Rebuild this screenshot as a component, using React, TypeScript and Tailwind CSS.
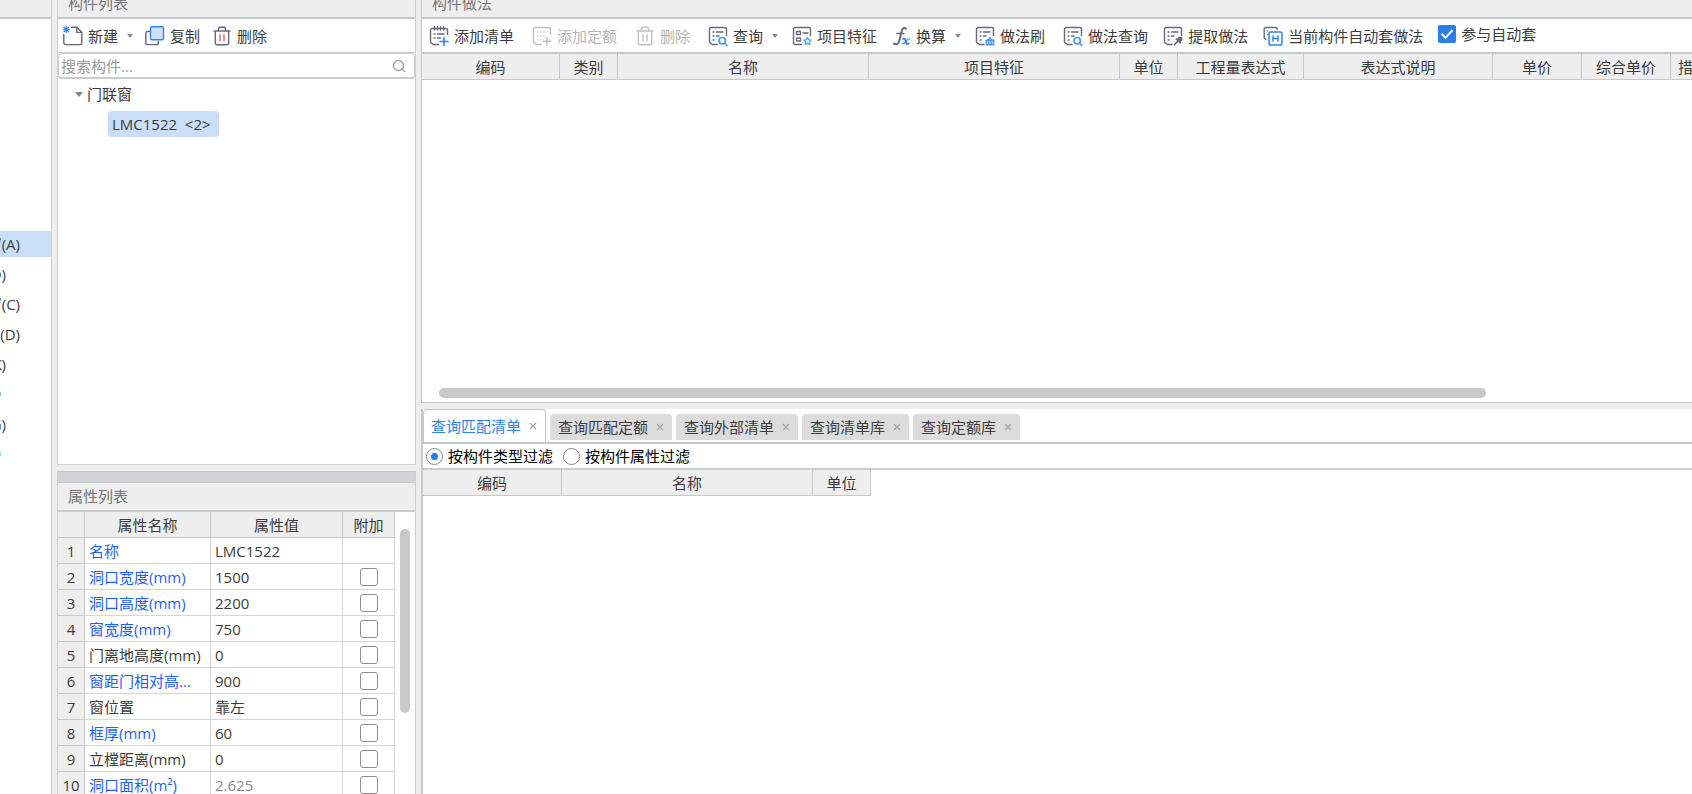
import type { ReactNode } from "react";

const INK = "#646a7c";
const BLUE = "#2f86ee";
const MUTED = "#c0c0c0";

function Svg({ children }: { children: ReactNode }) {
  return (
    <svg
      viewBox="0 0 20 20"
      className="size-5 shrink-0"
      fill="none"
      strokeWidth="1.4"
      strokeLinecap="round"
      strokeLinejoin="round"
      aria-hidden="true"
    >
      {children}
    </svg>
  );
}

function NewIcon() {
  return (
    <Svg>
      <path d="M8.500 1.200h5.500l4.800 5v10.600a1.800 1.800 0 0 1-1.800 1.800H2.600A1.800 1.800 0 0 1 .8 16.800V8.500" stroke={INK} />
      <path d="M13.800 1.400v5h4.800" stroke={INK} />
      <path d="M3.300 .6v5.800M.6 3.500h5.600M1 1.200l4.800 4.600M5.800 1.200L1 5.800" stroke={BLUE} strokeWidth="1.200" />
    </Svg>
  );
}

function CopyIcon() {
  return (
    <Svg>
      <path d="M4.500 5.500H2.400A1.600 1.600 0 0 0 .8 7.100v9.900a1.600 1.600 0 0 0 1.600 1.600h9.300a1.600 1.600 0 0 0 1.600-1.600V15.500" stroke={INK} />
      <rect x="5.500" y=".8" width="13" height="13" rx="1.6" fill="#cfe1fa" stroke={BLUE} />
    </Svg>
  );
}

function TrashIcon({ disabled }: { disabled?: boolean }) {
  const ink = disabled ? MUTED : INK;
  return (
    <Svg>
      <path d="M2 5h16M6 4.800l1.200-3.600h5.600L14 4.800M3.300 5.300v11.500a2 2 0 0 0 2 2h9.400a2 2 0 0 0 2-2V5.300" stroke={ink} />
      <path d="M8 8.800v6M12 8.800v6" stroke={disabled ? MUTED : "#ee5a5e"} />
    </Svg>
  );
}

function AddListIcon() {
  return (
    <Svg>
      <path d="M9.500 18.500H4.200l-2.700-2.300V4a1.500 1.500 0 0 1 1.500-1.500h14A1.500 1.500 0 0 1 18.500 4v4.500" stroke={INK} />
      <path d="M5.500 .8v3.200M8.500 .8v3.200M11.500 .8v3.200M14.500 .8v3.200M5 8h1M8.500 8h6.500M5 12h1M8.500 12h3" stroke={INK} />
      <path d="M15 11.500v8M11 15.500h8" stroke={BLUE} strokeWidth="1.600" />
    </Svg>
  );
}

function AddQuotaIcon() {
  return (
    <Svg>
      <path d="M9 18.500H4.200l-2.700-2.300V3A1.500 1.500 0 0 1 3 1.500h14A1.500 1.500 0 0 1 18.500 3v5.500" stroke={MUTED} />
      <path d="M5.500 6h.1M9 6h.1M12 6h.1M15 6h.1M5.500 10h.1M9 10h.1M12 10h.1M5.500 14h.1M9 14h.1" stroke={MUTED} />
      <path d="M15 11.500v7.500M11.200 15.200h7.600" stroke={MUTED} />
    </Svg>
  );
}

function SheetBase() {
  return (
    <>
      <path d="M9 18.500H4.200l-2.700-2.300V3A1.500 1.500 0 0 1 3 1.500h14A1.500 1.500 0 0 1 18.500 3v6.500" stroke={INK} />
      <path d="M5 6h1M8.500 6h6.500M5 10h1M8.500 10h2.500M5 14h1" stroke={INK} />
    </>
  );
}

function QueryIcon() {
  return (
    <Svg>
      <SheetBase />
      <circle cx="14.200" cy="14.700" r="3.200" stroke="#4a97f3" strokeWidth="1.600" />
      <path d="M16.700 17.200l2.200 2.200" stroke="#4a97f3" strokeWidth="1.600" />
    </Svg>
  );
}

function FeatureIcon() {
  return (
    <Svg>
      <path d="M9.500 18.500H3A1.500 1.500 0 0 1 1.500 17V3A1.500 1.500 0 0 1 3 1.500h14A1.500 1.500 0 0 1 18.500 3v6.500" stroke={INK} />
      <path d="M4.500 5.500h4v3h-4zM4.500 12h4v3h-4zM11 7h5" stroke={INK} strokeWidth="1.300" />
      <path d="M15.500 11.500l1.200 2.200 2.500.4-1.800 1.800.4 2.600-2.300-1.200-2.300 1.200.4-2.600-1.800-1.800 2.500-.4z" stroke="#5ba3f7" />
    </Svg>
  );
}

function FxIcon() {
  return (
    <Svg>
      <path d="M14.800 2.800c-.7-1.300-3-1.300-3.900 1.400-.6 1.800-1.800 8-2.600 10.800-.8 3-2.500 3.700-5.300 2.700" stroke={INK} strokeWidth="2" />
      <path d="M5.800 7.500h7.200" stroke={INK} strokeWidth="1.300" />
      <path d="M12.300 12.800c1.700-.6 2 .9 2.600 2.700s1.100 2.900 2.700 2.200" stroke={BLUE} strokeWidth="2" />
      <path d="M18.500 12.800c-1.500-.3-2.400 1.200-3.500 2.700s-1.800 2.500-3.300 2" stroke={BLUE} strokeWidth="1.200" />
    </Svg>
  );
}

function BrushIcon() {
  return (
    <Svg>
      <SheetBase />
      <path d="M11.300 14.500l2.400-1 1.300-1.700 1.300 1.700 2.400 1v4.300h-7.400z" stroke="#4a97f3" fill="#d3e5fc" />
      <path d="M11.300 14.800h7.400M13.800 16.500v2M16.200 16.500v2" stroke="#4a97f3" />
    </Svg>
  );
}

function ExtractIcon() {
  return (
    <Svg>
      <SheetBase />
      <path d="M11.500 18.800l3.300-3.600M13.200 13l4 3.800" stroke={INK} strokeWidth="1.600" />
      <path d="M14.800 13.200l1.200-1.700h2.500v2.700l-1.500 1.300z" stroke={INK} fill={INK} />
    </Svg>
  );
}

function AutoIcon() {
  return (
    <Svg>
      <path d="M2.800 13.500l-1.600-1.500V3A1.500 1.500 0 0 1 2.700 1.500h10A1.500 1.500 0 0 1 14.200 3v.5M4.500 5h.1M4.500 8.500h.1" stroke={INK} />
      <rect x="6" y="6" width="13" height="13" rx="1.800" stroke={BLUE} strokeWidth="1.500" />
      <path d="M10 9.800v5.400M15 9.800v5.400M10 12.500h5" stroke={BLUE} />
    </Svg>
  );
}

function Caret() {
  return (
    <svg viewBox="0 0 6 4" className="ml-1 h-1 w-1.5 shrink-0" aria-hidden="true">
      <path d="M0 0h6L3 4z" fill="#8a8a8a" />
    </svg>
  );
}

type ToolProps = { icon: ReactNode; label: string; disabled?: boolean; menu?: boolean };

function Tool({ icon, label, disabled, menu }: ToolProps) {
  return (
    <button
      type="button"
      disabled={disabled}
      className="flex shrink-0 items-center gap-[5px] whitespace-nowrap disabled:text-[#b5b5b5]"
    >
      {icon}
      <span>{label}</span>
      {menu && <Caret />}
    </button>
  );
}

function PanelTitle({ children }: { children: ReactNode }) {
  return <h2 className="px-2.5 leading-[27px] text-[#777777]">{children}</h2>;
}

const categories = [
  { text: "门联窗(A)", long: true, active: true },
  { text: "墙洞(D)", long: false },
  { text: "带形窗(C)", long: true },
  { text: "带形洞(D)", long: true },
  { text: "飘窗(X)", long: false },
  { text: "", long: false, mark: "bg-[#8cc4f5]" },
  { text: "天窗(G)", long: false },
  { text: "", long: false, mark: "bg-[#7feaf5]" },
];

function CategoryStrip() {
  return (
    <nav className="flex w-[52px] shrink-0 flex-col border-r border-[#d0d0d0] bg-white">
      <div className="h-[19px] shrink-0 border-b-2 border-[#c5c9cc] bg-[#eeeeee]" />
      <ul className="pt-[210px]">
        {categories.map((c, i) => (
          <li key={i} className="flex h-[30px] items-center">
            <a
              href="#"
              className={
                c.active
                  ? "flex h-[26px] w-full items-center bg-[#c9dff9]"
                  : "flex h-[26px] w-full items-center"
              }
            >
              {c.mark ? (
                <span className={`${c.mark} h-1 w-px`} />
              ) : (
                <span
                  className={
                    c.long
                      ? "flex w-5 justify-end overflow-hidden whitespace-nowrap"
                      : "flex w-1.5 justify-end overflow-hidden whitespace-nowrap"
                  }
                >
                  {c.text}
                </span>
              )}
            </a>
          </li>
        ))}
      </ul>
    </nav>
  );
}

const properties = [
  { name: "名称", value: "LMC1522", key: true, box: false },
  { name: "洞口宽度(mm)", value: "1500", key: true, box: true },
  { name: "洞口高度(mm)", value: "2200", key: true, box: true },
  { name: "窗宽度(mm)", value: "750", key: true, box: true },
  { name: "门离地高度(mm)", value: "0", key: false, box: true },
  { name: "窗距门相对高...", value: "900", key: true, box: true },
  { name: "窗位置", value: "靠左", key: false, box: true },
  { name: "框厚(mm)", value: "60", key: true, box: true },
  { name: "立樘距离(mm)", value: "0", key: false, box: true },
  { name: "洞口面积(m²)", value: "2.625", key: true, box: true, computed: true },
];

function PropertyTable() {
  return (
    <div className="flex min-h-0 flex-1 overflow-hidden bg-white">
      <table className="h-fit w-[337px] table-fixed border-separate border-spacing-0">
        <colgroup>
          <col className="w-[27px]" />
          <col className="w-[126px]" />
          <col className="w-[132px]" />
          <col className="w-[52px]" />
        </colgroup>
        <thead>
          <tr className="h-[26px] bg-[#eeeeee]">
            <th className="border-r border-b border-[#c8c8c8] p-0" />
            <th className="border-r border-b border-[#c8c8c8] p-0 font-normal">属性名称</th>
            <th className="border-r border-b border-[#c8c8c8] p-0 font-normal">属性值</th>
            <th className="border-r border-b border-[#c8c8c8] p-0 font-normal">附加</th>
          </tr>
        </thead>
        <tbody>
          {properties.map((p, i) => (
            <tr key={p.name} className="h-[26px]">
              <td className="border-r border-b border-[#c8c8c8] bg-[#eeeeee] p-0 text-center">{i + 1}</td>
              <td
                className={
                  p.key
                    ? "border-r border-b border-[#d6d6d6] p-0 pl-1 whitespace-nowrap text-[#1f5fff]"
                    : "border-r border-b border-[#d6d6d6] p-0 pl-1 whitespace-nowrap"
                }
              >
                {p.name}
              </td>
              <td
                className={
                  p.computed
                    ? "border-r border-b border-[#d6d6d6] p-0 pl-1 text-[#8c8c8c]"
                    : "border-r border-b border-[#d6d6d6] p-0 pl-1"
                }
              >
                {p.value}
              </td>
              <td className="border-r border-b border-[#d6d6d6] p-0">
                {p.box && (
                  <input
                    type="checkbox"
                    aria-label={p.name}
                    className="mx-auto block size-[18px] appearance-none rounded-[3px] border border-[#8f8f8f] bg-white"
                  />
                )}
              </td>
            </tr>
          ))}
        </tbody>
      </table>
      <div className="flex flex-1 justify-center pt-[17px]">
        <div className="h-[184px] w-2.5 rounded-full bg-[#c9c9c9]" />
      </div>
    </div>
  );
}

function ComponentColumn() {
  return (
    <div className="ml-[5px] flex w-[359px] shrink-0 flex-col">
      <section className="flex h-[465px] shrink-0 flex-col border-x border-b border-[#cdcfd1] bg-white">
        <header className="flex h-[19px] shrink-0 items-end overflow-hidden border-b-2 border-[#c5c9cc] bg-[#eeeeee]">
          <PanelTitle>构件列表</PanelTitle>
        </header>
        <div className="flex h-[34px] shrink-0 items-center gap-3 border-b border-[#c5c9cc] px-[5px]">
          <Tool icon={<NewIcon />} label="新建" menu />
          <Tool icon={<CopyIcon />} label="复制" />
          <Tool icon={<TrashIcon />} label="删除" />
        </div>
        <label className="flex h-[26px] shrink-0 items-center rounded border border-b-2 border-[#c9cccf] pr-2 pl-0.5">
          <input
            type="search"
            aria-label="搜索构件"
            placeholder="搜索构件..."
            className="min-w-0 flex-1 bg-transparent outline-none placeholder:text-[#999999]"
          />
          <svg viewBox="0 0 14 14" className="size-3.5" fill="none" stroke="#a5a5a5" strokeWidth="1.500" aria-hidden="true">
            <circle cx="6.500" cy="6.500" r="5" />
            <path d="M10 10l3 3" />
          </svg>
        </label>
        <ul className="pl-[17px]">
          <li>
            <div className="flex h-[30px] items-center gap-1">
              <svg viewBox="0 0 8 5" className="h-[5px] w-2" aria-hidden="true">
                <path d="M0 0h8L4 5z" fill="#858585" />
              </svg>
              <span>门联窗</span>
            </div>
            <ul className="pl-[33px]">
              <li className="flex h-[30px] items-center">
                <span className="rounded bg-[#c9dff9] pr-2 pl-1 leading-[26px] whitespace-pre">LMC1522  &lt;2&gt;</span>
              </li>
            </ul>
          </li>
        </ul>
      </section>
      <section className="mt-1.5 flex min-h-0 flex-1 flex-col border-x border-[#cdcfd1]">
        <div className="h-3 shrink-0 border-y border-[#c5c9cf] bg-[#d1d3d8]" />
        <header className="h-[29px] shrink-0 border-b-2 border-[#c9cbcd]">
          <PanelTitle>属性列表</PanelTitle>
        </header>
        <PropertyTable />
      </section>
    </div>
  );
}

function MethodToolbar() {
  return (
    <div className="flex h-[35px] shrink-0 items-center gap-[18px] border-b-2 border-[#c5c9cc] pl-[7px]">
      <Tool icon={<AddListIcon />} label="添加清单" />
      <Tool icon={<AddQuotaIcon />} label="添加定额" disabled />
      <Tool icon={<TrashIcon disabled />} label="删除" disabled />
      <div className="flex items-center gap-3.5">
        <Tool icon={<QueryIcon />} label="查询" menu />
        <Tool icon={<FeatureIcon />} label="项目特征" />
        <Tool icon={<FxIcon />} label="换算" menu />
        <Tool icon={<BrushIcon />} label="做法刷" />
      </div>
      <div className="flex items-center gap-[15px]">
        <Tool icon={<QueryIcon />} label="做法查询" />
        <Tool icon={<ExtractIcon />} label="提取做法" />
        <Tool icon={<AutoIcon />} label="当前构件自动套做法" />
        <label className="flex items-center gap-[5px] pb-1 whitespace-nowrap">
          <span className="relative block size-[18px]">
            <input type="checkbox" defaultChecked className="block size-[18px] appearance-none rounded-[2px] bg-[#2a7fe6]" />
            <svg viewBox="0 0 18 18" className="pointer-events-none absolute inset-0 size-[18px]" fill="none" stroke="#ffffff" strokeWidth="2" aria-hidden="true">
              <path d="M3.500 8.800l4 4L14.500 5" />
            </svg>
          </span>
          参与自动套
        </label>
      </div>
    </div>
  );
}

const methodColumns = [
  { label: "编码", width: "w-[138px]" },
  { label: "类别", width: "w-[58px]" },
  { label: "名称", width: "w-[251px]" },
  { label: "项目特征", width: "w-[251px]" },
  { label: "单位", width: "w-[58px]" },
  { label: "工程量表达式", width: "w-[126px]" },
  { label: "表达式说明", width: "w-[189px]" },
  { label: "单价", width: "w-[89px]" },
  { label: "综合单价", width: "w-[89px]" },
  { label: "措施项目", width: "w-[75px]" },
];

const matchColumns = [
  { label: "编码", width: "w-[139px]" },
  { label: "名称", width: "w-[251px]" },
  { label: "单位", width: "w-[58px]" },
];

function HeaderTable({ columns, size }: { columns: { label: string; width: string }[]; size: string }) {
  return (
    <table className={`${size} table-fixed border-separate border-spacing-0`}>
      <thead>
        <tr className="h-[26px] bg-[#eeeeee]">
          {columns.map((c) => (
            <th key={c.label} className={`${c.width} border-r border-b border-[#c8c8c8] p-0 font-normal`}>
              {c.label}
            </th>
          ))}
        </tr>
      </thead>
    </table>
  );
}

const tabs = ["查询匹配清单", "查询匹配定额", "查询外部清单", "查询清单库", "查询定额库"];

function Tabs() {
  return (
    <div role="tablist" className="flex h-[35px] shrink-0 items-end gap-1 border-b-2 border-[#c5c9cc]">
      {tabs.map((t, i) => (
        <button
          key={t}
          type="button"
          role="tab"
          aria-selected={i === 0}
          className={
            i === 0
              ? "flex h-[33px] items-center gap-2 rounded-t border border-b-0 border-[#c5c9cc] bg-white pr-2 pl-[7px] text-[#2b83ea]"
              : "mb-0.5 flex h-[26px] items-center gap-2 rounded-t bg-[#dcdcdc] pr-2 pl-2"
          }
        >
          {t}
          <svg viewBox="0 0 8 8" className="size-2" stroke="#a3a3a3" strokeWidth="1.200" aria-hidden="true">
            <path d="M1 1l6 6M7 1L1 7" />
          </svg>
        </button>
      ))}
    </div>
  );
}

function FilterOption({ label, checked }: { label: string; checked?: boolean }) {
  return (
    <label className="flex items-center gap-[5px] text-black">
      <input
        type="radio"
        name="filter"
        defaultChecked={checked}
        className="grid size-[17px] appearance-none place-items-center rounded-full border border-[#8a8a8a] bg-white before:size-[7px] before:rounded-full checked:before:bg-[#2a7fe6]"
      />
      {label}
    </label>
  );
}

function MethodColumn() {
  return (
    <main className="ml-[5px] flex min-w-0 flex-1 flex-col">
      <section className="flex h-[403px] shrink-0 flex-col overflow-hidden border-b border-l border-[#c5c9cc] bg-white">
        <header className="flex h-[19px] shrink-0 items-end overflow-hidden border-b-2 border-[#c5c9cc] bg-[#eeeeee]">
          <PanelTitle>构件做法</PanelTitle>
        </header>
        <MethodToolbar />
        <HeaderTable columns={methodColumns} size="w-[1324px]" />
        <div className="mt-auto mr-[206px] mb-1 ml-[17px] h-2.5 shrink-0 rounded-full bg-[#c9c9c9]" />
      </section>
      <section className="mt-1.5 flex min-h-0 flex-1 flex-col border-l-2 border-[#c5c9cc] bg-white">
        <Tabs />
        <div className="flex h-[26px] shrink-0 items-center gap-2.5 border-b-2 border-[#c9ccd0] px-[3px]">
          <FilterOption label="按构件类型过滤" checked />
          <FilterOption label="按构件属性过滤" />
        </div>
        <HeaderTable columns={matchColumns} size="w-[448px]" />
      </section>
    </main>
  );
}

export default function App() {
  return (
    <div className="flex h-screen overflow-hidden bg-[#eeeeee] font-['Open_Sans','Noto_Sans_CJK_SC',sans-serif] text-[15px] leading-5 text-[#3c3c3c]">
      <CategoryStrip />
      <ComponentColumn />
      <MethodColumn />
    </div>
  );
}
